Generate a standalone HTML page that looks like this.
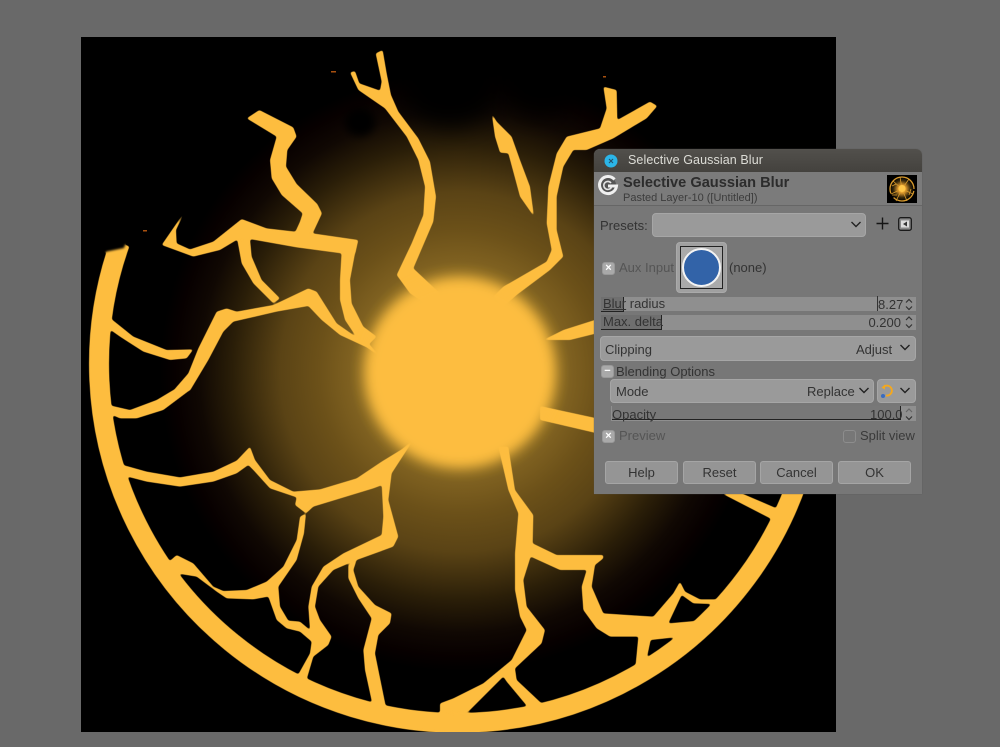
<!DOCTYPE html>
<html><head><meta charset="utf-8"><title>Selective Gaussian Blur</title>
<style>
html,body{margin:0;padding:0;background:#696969;width:1000px;height:747px;overflow:hidden}
#s{position:absolute;left:0;top:0}
#d{position:absolute;left:594px;top:149px;width:328px;height:345px;background:#777;border-radius:6px 6px 0 0;font:13px/16px "Liberation Sans",sans-serif;color:#333;overflow:hidden;box-shadow:0 0 1px #555}
#d div,#d svg{position:absolute}
.t{white-space:nowrap}
.b{background:#999;border:1px solid #a6a6a6;border-radius:4px;box-sizing:border-box}
.sp{background:#8f8f8f;box-sizing:border-box}
.pr{background:#6f6f6f;border-right:1px solid #222;border-bottom:1px solid #222;box-sizing:border-box}
.btn{background:#959595;border:1px solid #a5a5a5;border-radius:3px;box-sizing:border-box;text-align:center;top:312px;height:23px;line-height:21px;width:73px}
.ck{width:11px;height:11px;background:#a9a9a9;border:1px solid #999;border-radius:3px;color:#fff;font:bold 11px/11px "Liberation Sans",sans-serif;text-align:center}
.dis{color:#555}
</style></head><body>
<svg id="s" width="1000" height="747" viewBox="0 0 1000 747">
<defs>
<radialGradient id="g" gradientUnits="userSpaceOnUse" cx="460" cy="372" r="300">
<stop offset="0.3" stop-color="#a07c28"/>
<stop offset="0.37" stop-color="#7e6020"/>
<stop offset="0.47" stop-color="#6c5119"/>
<stop offset="0.6" stop-color="#5a4315"/>
<stop offset="0.76" stop-color="#2a1e08"/>
<stop offset="0.87" stop-color="#100803"/>
<stop offset="0.95" stop-color="#070000"/>
<stop offset="1" stop-color="#000"/>
</radialGradient>
<clipPath id="c"><rect x="81" y="37" width="755" height="695"/></clipPath>
<filter id="b5" x="-30%" y="-30%" width="160%" height="160%"><feGaussianBlur stdDeviation="6"/></filter>
<filter id="b12" x="-60%" y="-60%" width="220%" height="220%"><feGaussianBlur stdDeviation="12"/></filter>
<filter id="b4" x="-60%" y="-60%" width="220%" height="220%"><feGaussianBlur stdDeviation="4"/></filter>
<filter id="r" filterUnits="userSpaceOnUse" x="0" y="0" width="1000" height="747" color-interpolation-filters="sRGB"><feGaussianBlur stdDeviation="1"/><feComponentTransfer><feFuncA type="linear" slope="3" intercept="-1"/></feComponentTransfer></filter>
</defs>
<rect width="1000" height="747" fill="#696969"/>
<g clip-path="url(#c)">
<rect x="81" y="37" width="755" height="695" fill="#000"/>
<rect x="81" y="37" width="755" height="695" fill="url(#g)"/>
<g fill="#000">
<ellipse cx="450" cy="85" rx="50" ry="42" filter="url(#b12)"/>
<ellipse cx="540" cy="80" rx="40" ry="36" filter="url(#b12)"/>
<ellipse cx="360" cy="122" rx="15" ry="14" filter="url(#b4)"/>
</g>
<g filter="url(#r)" fill="#fdbd3f">
<path d="M120 243A359 359 0 1 0 806 452.200" fill="none" stroke="#fdbd3f" stroke-width="20"/>
<polygon points="80,257 124,248 132,222 80,222" fill="#000"/>
<g transform="translate(80 40) scale(.33333)">
<polygon points="500,235 538,210 640,262 650,290 622,330 618,380 650,432 712,492 726,520 698,580 645,578 660,545 668,520 605,465 575,415 570,360 590,290"/>
<polygon points="316,512 288,570 290,610 330,628 400,605 485,537 560,565 645,575 698,580 835,600 826,640 785,640 650,622 515,598 470,600 420,630 340,650 245,615"/>
<polygon points="472,600 510,597 515,650 545,720 600,775 580,790 520,730 485,670"/>
<polygon points="785,635 826,635 810,720 815,790 850,860 890,890 860,920 825,885 795,840 780,780 780,720"/>
<polygon points="85,830 160,890 260,930 340,928 320,955 270,960 190,935 120,890 85,865"/>
<polygon points="280,1052 325,1000 355,925 410,815 440,805 470,815 580,795 685,745 710,755 770,850 820,885 870,915 900,950 860,922 780,885 725,840 685,798 590,815 460,845 430,875 385,960 330,1052"/>
</g>
<g transform="translate(330 40) scale(.33333)">
<polygon points="60,97 75,93 88,130 150,152 155,125 137,40 158,30 170,100 183,165 205,215 265,295 300,365 318,470 310,545 250,685 330,760 300,800 240,760 200,705 245,610 280,525 285,440 265,360 230,290 165,205 85,150"/>
<polygon points="485,220 500,245 545,290 570,360 600,440 612,530 570,470 535,340 510,338 495,290"/>
<polygon points="520,740 650,665 665,630 650,550 655,440 680,340 710,290 810,265 830,205 820,140 860,150 862,240 960,185 982,198 950,235 850,295 770,330 730,330 700,380 680,470 680,570 700,650 660,690 560,765 520,800 490,770"/>
<polygon points="640,900 700,870 800,838 800,880 720,900"/>
</g>
<polygon points="540,406 600,419 600,434 540,420"/>
<g transform="translate(80 390) scale(.33333)">
<polygon points="85,45 150,60 230,30 280,0 330,0 250,60 170,85 120,85 90,72"/>
<polygon points="118,222 200,245 300,262 400,245 470,212 510,170 525,210 570,270 640,305 720,298 830,265 905,215 965,178 1000,150 935,250 920,280 880,295 700,350 678,370 645,345 650,322 570,295 520,240 505,225 470,250 400,275 300,290 200,275 135,258"/>
<polygon points="905,280 935,250 925,330 955,440 940,470 830,510 760,540 715,590 705,650 720,690 755,740 745,765 700,800 675,885 650,862 690,790 695,755 660,725 620,715 590,690 565,620 520,628 440,625 410,605 350,560 290,550 250,530 290,495 340,520 400,590 430,603 500,600 560,575 610,530 650,450 660,380 678,370 672,430 650,510 595,590 600,650 625,692 660,695 690,720 685,650 695,590 730,530 790,490 905,435 910,380"/>
<polygon points="805,525 830,510 820,540 835,590 885,645 935,670 930,700 895,735 885,790 920,962 880,955 855,840 850,780 875,685 835,625 805,565"/>
</g>
<g transform="translate(440 440) scale(.33333)">
<polygon points="175,20 205,20 225,150 280,225 278,310 350,345 490,345 490,355 465,375 455,440 490,520 640,530 700,460 720,425 735,455 780,478 830,478 815,492 760,490 725,465 685,550 765,543 725,590 632,600 615,680 585,695 595,590 510,590 470,565 430,510 425,440 440,390 360,390 272,350 250,420 260,500 315,570 305,610 225,685 230,720 315,800 275,815 200,725 190,710 85,815 0,820 0,790 40,775 130,730 215,660 245,600 260,570 240,530 225,450 225,340 235,220 205,150"/>
<polygon points="845,160 905,160 1010,205 1000,240"/>
</g>
</g>
<ellipse cx="460" cy="372.500" rx="95" ry="95" fill="#fdbd3f" filter="url(#b5)"/>
<g fill="#a8500f">
<rect x="331" y="71" width="5" height="1.500"/><rect x="143" y="230" width="4" height="1.500"/><rect x="603" y="76" width="3" height="1.500"/>
</g>
</g>
</svg>

<div id="d">
<div style="left:0;top:0;width:328px;height:23px;background:linear-gradient(#52504c,#44423e)"></div>
<svg style="left:10px;top:5px" width="14" height="14" viewBox="0 0 14 14"><circle cx="7" cy="7" r="6.500" fill="#2bb5e8"/><path d="M5 5l4 4M9 5l-4 4" stroke="#24506a" stroke-width="1.100"/></svg>
<div class="t" style="left:34px;top:3px;color:#dcdcd6;font-size:12.500px;line-height:17px;letter-spacing:.1px">Selective Gaussian Blur</div>
<div style="left:0;top:23px;width:328px;height:33px;background:#7b7b7b;border-bottom:1px solid #666"></div>
<svg style="left:3px;top:25px" width="22" height="22" viewBox="0 0 22 22"><circle cx="11" cy="11" r="8" fill="#555"/><path d="M17.500 5.500A8.500 8.500 0 1 0 19.500 12H11" fill="none" stroke="#f0f0f0" stroke-width="3"/><path d="M14 9A4 4 0 1 0 14.500 13" fill="none" stroke="#e4e4e4" stroke-width="1.600"/></svg>
<div class="t" style="left:29px;top:25px;font-weight:bold;font-size:14.600px;line-height:18px;color:#2c2c2c">Selective Gaussian Blur</div>
<div class="t" style="left:29px;top:42px;font-size:11px;line-height:14px;color:#3c3c3c">Pasted Layer-10 ([Untitled])</div>
<svg style="left:293px;top:26px" width="30" height="28" viewBox="0 0 30 28"><defs><radialGradient id="m"><stop offset="0" stop-color="#ffcc55"/><stop offset=".3" stop-color="#e8a030"/><stop offset=".7" stop-color="#3a2a0c"/><stop offset="1" stop-color="#000"/></radialGradient></defs><rect width="30" height="28" fill="#000"/><circle cx="15" cy="14" r="12" fill="url(#m)"/><circle cx="15" cy="14" r="12" fill="none" stroke="#d89a2c" stroke-width="1.300" stroke-dasharray="26 5 44" stroke-dashoffset="-2"/><g stroke="#d89a2c" stroke-width=".8" fill="none"><path d="M15 14L6 6M15 14L22 4M15 14L4 19M15 14L26 19M15 14L9 26M15 14L20 26M15 14L13 2M9 9L5 11M22 20L24 14M10 20L5 20"/></g><circle cx="15" cy="13.500" r="3.500" fill="#ffc648"/></svg>

<div class="t" style="left:6px;top:69px">Presets:</div>
<div class="b" style="left:58px;top:64px;width:214px;height:24px;background:#9a9a9a"></div>
<svg style="left:256px;top:71px" width="12" height="9" viewBox="0 0 12 9"><path d="M1.500 2l4.500 4.500L10.500 2" fill="none" stroke="#222" stroke-width="1.400"/></svg>
<svg style="left:282px;top:68px" width="13" height="13" viewBox="0 0 13 13"><path d="M6.500 0.500v12M.5 6.500h12" stroke="#151515" stroke-width="1.400"/></svg>
<svg style="left:304px;top:68px" width="14" height="14" viewBox="0 0 14 14"><rect x=".7" y=".7" width="12.600" height="12.600" rx="2" fill="#8a8a8a" stroke="#1a1a1a" stroke-width="1.300"/><rect x="3" y="3.500" width="8" height="7" fill="#ddd"/><path d="M9 4.500v5L5 7z" fill="#333"/></svg>

<div class="ck" style="left:8px;top:113px">×</div>
<div class="t dis" style="left:25px;top:111px">Aux Input</div>
<div class="b" style="left:82px;top:93px;width:51px;height:51px;background:#a0a0a0;border-color:#aaa"></div>
<div style="left:86px;top:97px;width:43px;height:43px;background:#aaa;border:1px solid #222;box-sizing:border-box"></div>
<svg style="left:87px;top:98px" width="41" height="41" viewBox="0 0 41 41"><circle cx="20.500" cy="20.500" r="18.500" fill="#3263a8" stroke="#f4f4f4" stroke-width="2"/></svg>
<div class="t" style="left:135px;top:111px">(none)</div>

<div class="sp" style="left:7px;top:148px;width:315px;height:14px"></div>
<div class="pr" style="left:7px;top:148px;width:23px;height:15px"></div>
<div class="t" style="left:9px;top:147px"><span style="text-decoration:underline">Blur</span> radius</div>
<div style="left:283px;top:147px;width:1px;height:15px;background:#333"></div>
<div class="t" style="left:284px;top:148px">8.27</div>
<svg style="left:309px;top:148px" width="12" height="15" viewBox="0 0 12 15"><path d="M3 5.500l3-3 3 3M3 9.500l3 3 3-3" fill="none" stroke="#333" stroke-width="1.200"/></svg>

<div class="sp" style="left:7px;top:166px;width:315px;height:15px"></div>
<div class="pr" style="left:7px;top:166px;width:61px;height:15px"></div>
<div class="t" style="left:9px;top:165px">Max. delta</div>
<div class="t" style="right:21px;top:166px">0.200</div>
<svg style="left:309px;top:166px" width="12" height="15" viewBox="0 0 12 15"><path d="M3 5l3-3 3 3M3 9.500l3 3 3-3" fill="none" stroke="#333" stroke-width="1.200"/></svg>

<div class="b" style="left:6px;top:187px;width:316px;height:25px;background:#9a9a9a"></div>
<div class="t" style="left:11px;top:193px">Clipping</div>
<div class="t" style="left:262px;top:193px">Adjust</div>
<svg style="left:305px;top:194px" width="12" height="9" viewBox="0 0 12 9"><path d="M1.500 2l4.500 4.500L10.500 2" fill="none" stroke="#222" stroke-width="1.400"/></svg>

<div class="ck" style="left:7px;top:216px;width:11px;height:11px;line-height:10px">−</div>
<div class="t" style="left:22px;top:215px">Blending Options</div>

<div class="b" style="left:16px;top:230px;width:264px;height:24px;background:#9a9a9a"></div>
<div class="t" style="left:22px;top:235px">Mode</div>
<div class="t" style="left:213px;top:235px">Replace</div>
<svg style="left:264px;top:237px" width="12" height="9" viewBox="0 0 12 9"><path d="M1.500 2l4.500 4.500L10.500 2" fill="none" stroke="#222" stroke-width="1.400"/></svg>
<div class="b" style="left:283px;top:230px;width:39px;height:24px;background:#9a9a9a"></div>
<svg style="left:286px;top:234px" width="15" height="16" viewBox="0 0 15 16"><path d="M4 3.500A5 5 0 1 1 6 12.500" fill="none" stroke="#f5a81c" stroke-width="1.800"/><path d="M1.500 4.500L5 1.500V6.500z" fill="#f5a81c"/><circle cx="3" cy="13" r="2" fill="#3a6cc0"/></svg>
<svg style="left:305px;top:237px" width="12" height="9" viewBox="0 0 12 9"><path d="M1.500 2l4.500 4.500L10.500 2" fill="none" stroke="#222" stroke-width="1.400"/></svg>

<div style="left:17px;top:257px;width:305px;height:15px;background:#8f8f8f"></div>
<div class="pr" style="left:18px;top:257px;width:289px;height:14px;background:#787878"></div>
<div class="t" style="left:18px;top:258px">Opacity</div>
<div class="t" style="left:276px;top:258px">100.0</div>
<svg style="left:309px;top:258px" width="12" height="15" viewBox="0 0 12 15"><path d="M3 5l3-3 3 3" fill="none" stroke="#666" stroke-width="1.200"/><path d="M3 9.500l3 3 3-3" fill="none" stroke="#333" stroke-width="1.200"/></svg>

<div class="ck" style="left:8px;top:281px">×</div>
<div class="t dis" style="left:25px;top:279px">Preview</div>
<div class="ck" style="left:249px;top:281px;background:#777;border-color:#8d8d8d"></div>
<div class="t" style="left:266px;top:279px;color:#3a3a3a">Split view</div>

<div class="btn" style="left:11px">Help</div>
<div class="btn" style="left:89px">Reset</div>
<div class="btn" style="left:166px">Cancel</div>
<div class="btn" style="left:244px">OK</div>
</div>
</body></html>
